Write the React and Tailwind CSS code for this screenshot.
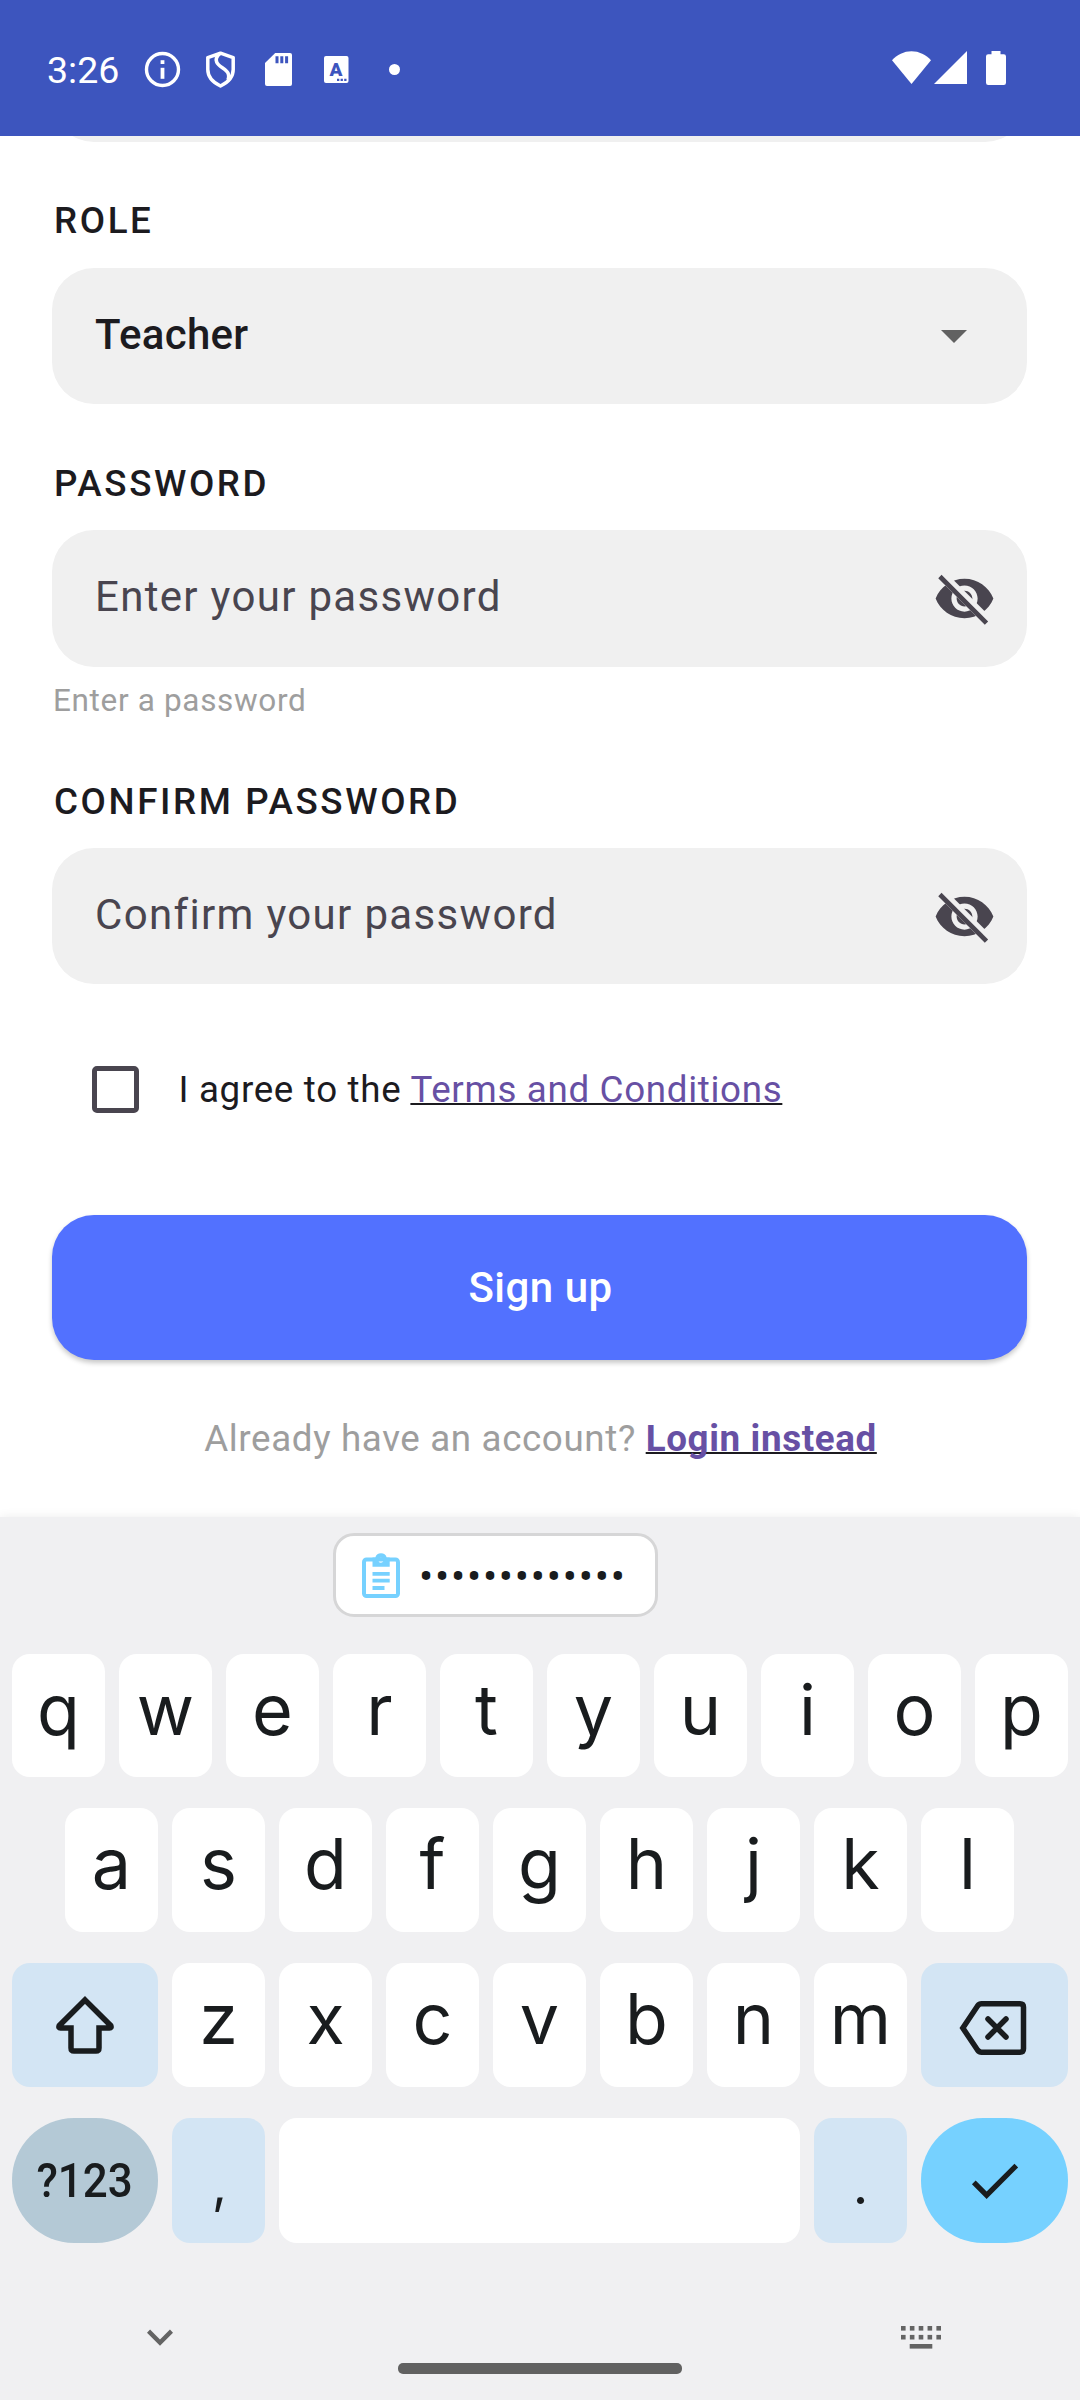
import React from "react";

function StatusBar() {
  return (
    <header className="flex h-[136px] shrink-0 items-center bg-[#3d55be] pt-[3px] pl-[47px] pr-[74px] text-white">
      <span className="w-[97px] pt-px text-[37.5px] leading-[44px]">3:26</span>
      <svg className="size-[37px]" viewBox="0 0 37 37" fill="none" stroke="currentColor">
        <circle cx="18.5" cy="18.5" r="16" strokeWidth="3.4" />
        <path d="M18.5 16.8v11" strokeWidth="3.8" />
        <path d="M18.5 9.2v3.8" strokeWidth="3.8" />
      </svg>
      <svg className="ml-[24px] h-[37px] w-[31px]" viewBox="0 0 31 37" fill="none" stroke="currentColor" strokeWidth="3.5" strokeLinejoin="round">
        <path d="M15.500 2.200 28.200 6.600v11.900c0 7.100-4.700 12.700-12.700 16.500C7.500 31.200 2.800 25.600 2.800 18.500V6.600z" />
        <path d="M15 2.500c-3.200 2.300-4.500 5.400-3.300 8.700 2 5.200 10.500 6.500 11.800 12.300.5 2.300.2 4-.6 5.500" />
      </svg>
      <svg className="ml-[28.5px] h-[33px] w-[27px]" viewBox="0 0 27 33">
        <path fill="currentColor" d="M10.200 0H25a2 2 0 0 1 2 2v29a2 2 0 0 1-2 2H2a2 2 0 0 1-2-2V10z" />
        <path fill="#3d55be" d="M10.500 3.300h3v7h-3zM15.300 3.300h3v7h-3zM20.100 3.300h3v7h-3z" />
      </svg>
      <svg className="ml-[32.5px] h-[27px] w-[25px]" viewBox="0 0 25 27">
        <rect width="24.500" height="27" rx="2" fill="currentColor" />
        <text x="12" y="19.500" textAnchor="middle" className="fill-[#3d55be] text-[19px] font-black">A</text>
        <path fill="#3d55be" d="M13 22.800h2.300v2.300H13zM16.600 22.800h2.300v2.300h-2.300zM20.200 22.800h2.300v2.300h-2.300z" />
      </svg>
      <span className="ml-[40px] size-[10.500px] rounded-full bg-white" />
      <div className="ml-auto flex items-start pb-[3px]">
        <svg className="h-[33px] w-[39px]" viewBox="0 0 39 33" fill="currentColor">
          <path d="M19.500 33 0 9.300C5 3.600 12 .2 19.500.2S34 3.600 39 9.300z" />
        </svg>
        <svg className="ml-[3px] h-[33px] w-[33px]" viewBox="0 0 33 33" fill="currentColor">
          <path d="M33 0v33H0z" />
        </svg>
        <svg className="ml-[19px] h-[34px] w-[20px]" viewBox="0 0 20 34" fill="currentColor">
          <path d="M5.500 0h9v3.300h3.300A2.200 2.200 0 0 1 20 5.500v26.300a2.200 2.200 0 0 1-2.200 2.200H2.200A2.200 2.200 0 0 1 0 31.800V5.500a2.200 2.200 0 0 1 2.200-2.200h3.300z" />
        </svg>
      </div>
    </header>
  );
}

function EyeOff({ maskId }) {
  return (
    <svg className="size-[63px]" viewBox="0 0 24 24">
      <mask id={maskId} maskUnits="userSpaceOnUse" x="0" y="0" width="24" height="24">
        <rect width="24" height="24" fill="white" />
        <path d="M2 4.270 19.730 22l2.540-2.540L4.540 1.730z" fill="black" />
      </mask>
      <path
        mask={`url(#${maskId})`}
        fill="#49454f"
        d="M12 4.500C7 4.500 2.730 7.610 1 12c1.730 4.390 6 7.500 11 7.500s9.270-3.110 11-7.500c-1.730-4.390-6-7.500-11-7.500zM12 17c-2.760 0-5-2.240-5-5s2.240-5 5-5 5 2.240 5 5-2.240 5-5 5zm0-8c-1.660 0-3 1.340-3 3s1.340 3 3 3 3-1.340 3-3-1.340-3-3-3z"
      />
      <path d="M3.270 4.270 19.740 20.740" fill="none" stroke="#49454f" strokeWidth="1.800" strokeLinecap="square" />
    </svg>
  );
}

function Label({ children, className }) {
  return (
    <div className={`pl-[2px] text-[36.750px] leading-[44px] font-medium tracking-[2.600px] text-[#1c1b1f] ${className}`}>
      {children}
    </div>
  );
}

function SignUpForm() {
  return (
    <main className="flex h-[1381px] shrink-0 flex-col overflow-hidden bg-white pr-[53px] pl-[52px]">
      <div className="flex h-[6px] shrink-0 items-end overflow-hidden">
        <div className="h-[136px] w-full shrink-0 rounded-[42px] bg-[#f0f0f0]" />
      </div>

      <Label className="mt-[57px]">ROLE</Label>
      <div className="mt-[25px] flex h-[136px] shrink-0 items-center justify-between rounded-[42px] bg-[#f0f0f0] pr-[60px] pl-[43px]">
        <span className="pb-[3px] text-[42px] leading-[50px] font-medium tracking-[0.300px] text-[#1c1b1f]">Teacher</span>
        <svg className="h-[13px] w-[26px]" viewBox="0 0 26 13">
          <path d="M0 0h26L13 13z" fill="#616161" />
        </svg>
      </div>

      <Label className="mt-[58px]">PASSWORD</Label>
      <div className="mt-[24px] flex h-[137px] shrink-0 items-center justify-between rounded-[42px] bg-[#f0f0f0] pr-[31px] pl-[43px]">
        <span className="pb-[4px] text-[42px] leading-[50px] tracking-[1.310px] text-[#49454f]">Enter your password</span>
        <EyeOff maskId="eye-password" />
      </div>
      <div className="mt-[16px] pl-px text-[31.500px] leading-[36px] tracking-[0.660px] text-[#9e9e9e]">Enter a password</div>

      <Label className="mt-[61px]">CONFIRM PASSWORD</Label>
      <div className="mt-[24px] flex h-[136px] shrink-0 items-center justify-between rounded-[42px] bg-[#f0f0f0] pr-[31px] pl-[43px]">
        <span className="pb-[3px] text-[42px] leading-[50px] tracking-[1.330px] text-[#49454f]">Confirm your password</span>
        <EyeOff maskId="eye-confirm" />
      </div>

      <div className="mt-[82px] flex h-[47px] shrink-0 items-center pl-[40px]">
        <span className="size-[47px] rounded-[5px] border-[5px] border-[#49454f]" />
        <span className="ml-[39.500px] text-[36.750px] leading-[44px] tracking-[0.670px] whitespace-pre text-[#1c1b1f]">
          I agree to the{" "}
          <span className="underline decoration-[#1c1b1f] decoration-2 underline-offset-[1px] [text-decoration-skip-ink:none]">
            <span className="text-[#6750a4]">Terms and Conditions</span>
          </span>
        </span>
      </div>

      <div className="mt-[102px] flex h-[145px] shrink-0 items-center justify-center rounded-[42px] bg-[#5271ff] pl-[2px] text-[42px] leading-[50px] font-medium tracking-[0.500px] text-white shadow-[0_3px_5px_rgba(0,0,0,0.22)]">
        Sign up
      </div>

      <div className="mt-[57px] pl-[2px] text-center text-[36.750px] leading-[44px] tracking-[0.630px] whitespace-pre text-[#9e9e9e]">
        Already have an account?{" "}
        <span className="underline decoration-[#1c1b1f] decoration-2 underline-offset-[1px] [text-decoration-skip-ink:none]">
          <span className="font-bold text-[#6750a4]">Login instead</span>
        </span>
      </div>
    </main>
  );
}

function Key({ children }) {
  return (
    <div className="flex h-full w-[93px] items-center justify-center rounded-[18px] bg-white pb-[12px] font-[Inter,sans-serif] text-[70px] leading-[80px] text-[#191c1e]">
      {children}
    </div>
  );
}

function Keyboard() {
  return (
    <section className="relative flex h-[883px] shrink-0 flex-col bg-[#f0f0f2] text-[#191c1e] shadow-[0_0_10px_rgba(0,0,0,0.080)]">
      <div className="mt-[16px] ml-[333px] flex h-[84px] w-[325px] shrink-0 items-center rounded-[21px] border-[3px] border-[#d6d6d7] bg-white pl-[25.500px]">
        <svg className="h-[45px] w-[38px]" viewBox="0 0 38 45" fill="none">
          <rect x="2" y="6.500" width="34" height="36.500" rx="2.500" stroke="#76d1ff" strokeWidth="4" />
          <path
            fill="#76d1ff"
            fillRule="evenodd"
            d="M10.500 4.500h2.800a6 6 0 0 1 11.400 0h3v9.300H10.500zM19 4.700a2.500 2.500 0 1 0 0 5 2.500 2.500 0 0 0 0-5z"
          />
          <path d="M10.500 20.800h17.200M10.500 27.700h17.200M10.500 35h12" stroke="#76d1ff" strokeWidth="3.800" />
        </svg>
        <span className="ml-[19.500px] pt-[3px] text-[42px] leading-[50px] tracking-[1.800px]">•••••••••••••</span>
      </div>

      <div className="mt-[37px] flex h-[123px] shrink-0 gap-[14px] pl-[12px]">
        {"qwertyuiop".split("").map((k) => (
          <Key key={k}>{k}</Key>
        ))}
      </div>

      <div className="mt-[31px] flex h-[124px] shrink-0 gap-[14px] pl-[65px]">
        {"asdfghjkl".split("").map((k) => (
          <Key key={k}>{k}</Key>
        ))}
      </div>

      <div className="mt-[31px] flex h-[124px] shrink-0 gap-[14px] pl-[12px]">
        <div className="flex w-[146px] items-center justify-center rounded-[18px] bg-[#d3e5f4]">
          <svg className="h-[60px] w-[62px]" viewBox="0 0 62 60" fill="none" stroke="#191c1e" strokeWidth="5.500">
            <path d="M31 5 56.800 30.700q1 2.300-1.300 2.300H45v20q0 3-3 3H20q-3 0-3-3V33H6.500q-2.300 0-1.300-2.300z" />
          </svg>
        </div>
        {"zxcvbnm".split("").map((k) => (
          <Key key={k}>{k}</Key>
        ))}
        <div className="flex w-[147px] items-center justify-center rounded-[18px] bg-[#d3e5f4] pt-[5px] pr-[3px]">
          <svg className="h-[54px] w-[68px]" viewBox="0 0 68 54" fill="none" stroke="#191c1e" strokeWidth="5.500">
            <path d="M3.800 27 18.500 5q1.700-2.200 4-2.200H61q3.500 0 3.500 3.500v41.400q0 3.500-3.500 3.500H22.500q-2.300 0-4-2.200z" />
            <path d="m29 18 18 18m0-18L29 36" strokeLinecap="round" />
          </svg>
        </div>
      </div>

      <div className="mt-[31px] flex h-[125px] shrink-0 gap-[14px] pl-[12px]">
        <div className="flex w-[146px] items-center justify-center rounded-[62px] bg-[#b4c9d6] text-[48px] leading-[56px] font-medium">
          <span className="scale-x-[0.915]">?123</span>
        </div>
        <div className="flex w-[93px] items-center justify-center rounded-[18px] bg-[#d3e5f4] pt-[9px] pl-[2px] font-[Inter,sans-serif] text-[52px] leading-[64px]">,</div>
        <div className="w-[521px] rounded-[18px] bg-white" />
        <div className="flex w-[93px] items-center justify-center rounded-[18px] bg-[#d3e5f4] pt-[8px] font-[Inter,sans-serif] text-[54px] leading-[64px]">.</div>
        <div className="flex w-[147px] items-center justify-center rounded-[62px] bg-[#76d1ff]">
          <svg className="size-[63px]" viewBox="0 0 24 24" fill="#191c1e">
            <path d="M9 16.170 4.830 12l-1.420 1.410L9 19 21 7l-1.410-1.410z" />
          </svg>
        </div>
      </div>

      <div className="mt-[68px] flex h-[52px] shrink-0 justify-between pr-[133px] pl-[134px]">
        <svg className="size-[52px]" viewBox="0 0 24 24" fill="#646464">
          <path d="M7.410 8.590 12 13.170l4.590-4.580L18 10l-6 6-6-6z" />
        </svg>
        <svg className="mt-[15px] h-[23px] w-[46px]" viewBox="0 0 46 23" fill="#646464">
          {[0, 1, 2, 3, 4].map((i) => (
            <g key={i}>
              <rect x={i * 8.85} width="4.600" height="4.600" />
              <rect x={i * 8.85} y="8.900" width="4.600" height="4.600" />
            </g>
          ))}
          <rect x="8.700" y="18" width="22.600" height="4.600" />
        </svg>
      </div>
      <div className="ml-[398px] h-[11px] w-[284px] shrink-0 rounded-[5px] bg-[#616161]" />
    </section>
  );
}

export default function App() {
  return (
    <div className="flex h-[2400px] w-[1080px] flex-col overflow-hidden bg-white font-[Roboto,sans-serif]">
      <StatusBar />
      <SignUpForm />
      <Keyboard />
    </div>
  );
}
